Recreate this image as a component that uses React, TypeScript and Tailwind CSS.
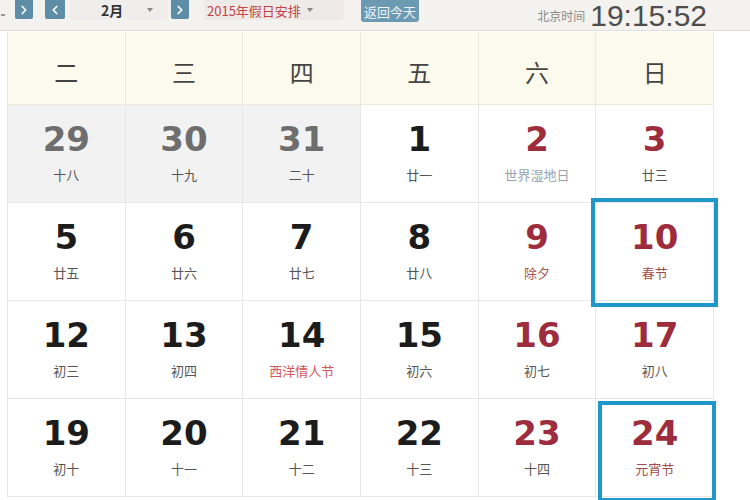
import { ChevronLeft, ChevronRight } from "lucide-react";

type Day = {
  d: number;
  l: string;
  red?: boolean;
  prev?: boolean;
  lc?: string;
  box?: "top" | "bottom";
};

const weekdays = ["二", "三", "四", "五", "六", "日"];

const rows: Day[][] = [
  [
    { d: 29, l: "十八", prev: true },
    { d: 30, l: "十九", prev: true },
    { d: 31, l: "二十", prev: true },
    { d: 1, l: "廿一" },
    { d: 2, l: "世界湿地日", red: true, lc: "text-[#9aa3ad]" },
    { d: 3, l: "廿三", red: true },
  ],
  [
    { d: 5, l: "廿五" },
    { d: 6, l: "廿六" },
    { d: 7, l: "廿七" },
    { d: 8, l: "廿八" },
    { d: 9, l: "除夕", red: true, lc: "text-[#a4564f]" },
    { d: 10, l: "春节", red: true, lc: "text-[#a24a4a]", box: "top" },
  ],
  [
    { d: 12, l: "初三" },
    { d: 13, l: "初四" },
    { d: 14, l: "西洋情人节", lc: "text-[#cf5757]" },
    { d: 15, l: "初六" },
    { d: 16, l: "初七", red: true },
    { d: 17, l: "初八", red: true },
  ],
  [
    { d: 19, l: "初十" },
    { d: 20, l: "十一" },
    { d: 21, l: "十二" },
    { d: 22, l: "十三" },
    { d: 23, l: "十四", red: true },
    { d: 24, l: "元宵节", red: true, lc: "text-[#a24a4a]", box: "bottom" },
  ],
];

function NavButton({ dir, className }: { dir: "left" | "right"; className?: string }) {
  return (
    <div className={`flex h-[19px] items-center justify-center rounded-b-[2px] bg-[#5e8da7] ${className ?? ""}`}>
      {dir === "left" ? (
        <ChevronLeft size={14} color="#ffffff" strokeWidth={3} />
      ) : (
        <ChevronRight size={14} color="#ffffff" strokeWidth={3} />
      )}
    </div>
  );
}

function Caret() {
  return <span className="block h-0 w-0 border-x-[3px] border-t-[4px] border-x-transparent border-t-[#888]" />;
}

function Cell({ day }: { day: Day }) {
  const numColor = day.prev ? "text-[#6e6e6e]" : day.red ? "text-[#9d2c3c]" : "text-[#1c1c1c]";
  const lunarColor = day.lc ?? "text-[#555]";
  return (
    <div
      className={`relative flex h-[98px] flex-col items-center border-r border-b border-[#e7e7e7] pt-[17px] ${
        day.prev ? "bg-[#f2f2f2]" : "bg-white"
      }`}
    >
      <div className={`font-['DejaVu_Sans',sans-serif] text-[34px] font-bold leading-none ${numColor}`}>{day.d}</div>
      <div className={`mt-[12px] font-['Noto_Sans_CJK_SC',sans-serif] text-[13px] leading-[13px] ${lunarColor}`}>
        {day.l}
      </div>
      {day.box === "top" && (
        <div className="absolute -top-[5px] -right-[5px] -bottom-[7px] -left-[5px] z-10 border-[4px] border-[#1f97c9]" />
      )}
      {day.box === "bottom" && (
        <div className="absolute top-[2px] -right-[3px] -bottom-[6px] left-[2px] z-10 border-[4px] border-[#1f97c9]" />
      )}
    </div>
  );
}

export default function App() {
  return (
    <div className="h-[500px] w-[750px] overflow-hidden bg-white font-['Noto_Sans_CJK_SC',sans-serif]">
      {/* toolbar */}
      <div className="flex h-[31px] items-start border-b border-[#e2dfdb] bg-[#f4f2ef]">
        <div className="mt-[14px] ml-[1px] h-[2px] w-[4px] bg-[#9a9a9a]" />
        <NavButton dir="right" className="ml-[10px] w-[18px]" />
        <NavButton dir="left" className="ml-[12px] w-[20px]" />
        <div className="ml-[5px] flex h-[20px] w-[98px] items-center rounded-b-[3px] bg-[#f0eeec] pl-[31px]">
          <span className="font-['Noto_Sans_CJK_SC',sans-serif] text-[14px] font-bold leading-none text-[#333]">2月</span>
          <span className="ml-[24px]">
            <Caret />
          </span>
        </div>
        <NavButton dir="right" className="ml-[3px] w-[18px]" />
        <div className="ml-[15px] flex h-[20px] w-[140px] items-center rounded-b-[3px] bg-[#eeeae7] pl-[3px]">
          <span className="text-[13px] leading-none text-[#c2434a]">2015年假日安排</span>
          <span className="ml-[6px]">
            <Caret />
          </span>
        </div>
        <div className="ml-[17px] flex h-[22px] w-[58px] items-center justify-center rounded-b-[3px] bg-[#6c9ab3] text-[13px] leading-none text-[#eef4f8]">
          返回今天
        </div>
        <div className="mr-[43px] ml-auto flex h-[31px] items-start gap-[5px]">
          <span className="mt-[10px] text-[12px] leading-none text-[#8a8a8a]">北京时间</span>
          <span className="font-['Liberation_Sans',sans-serif] text-[30px] leading-[31px] text-[#4d4d4d]">19:15:52</span>
        </div>
      </div>

      {/* calendar */}
      <div className="mt-[1px] ml-[7px] w-[707px] border-l border-[#e7e7e7]">
        <div className="grid grid-cols-6">
          {weekdays.map((w) => (
            <div
              key={w}
              className="flex h-[73px] items-center justify-center border-r border-b border-[#ece9d8] bg-[#fcfaec] pt-[8px] text-[24px] leading-none text-[#444]"
            >
              {w}
            </div>
          ))}
        </div>
        {rows.map((row, i) => (
          <div key={i} className="grid grid-cols-6">
            {row.map((day) => (
              <Cell key={day.d} day={day} />
            ))}
          </div>
        ))}
      </div>
    </div>
  );
}
